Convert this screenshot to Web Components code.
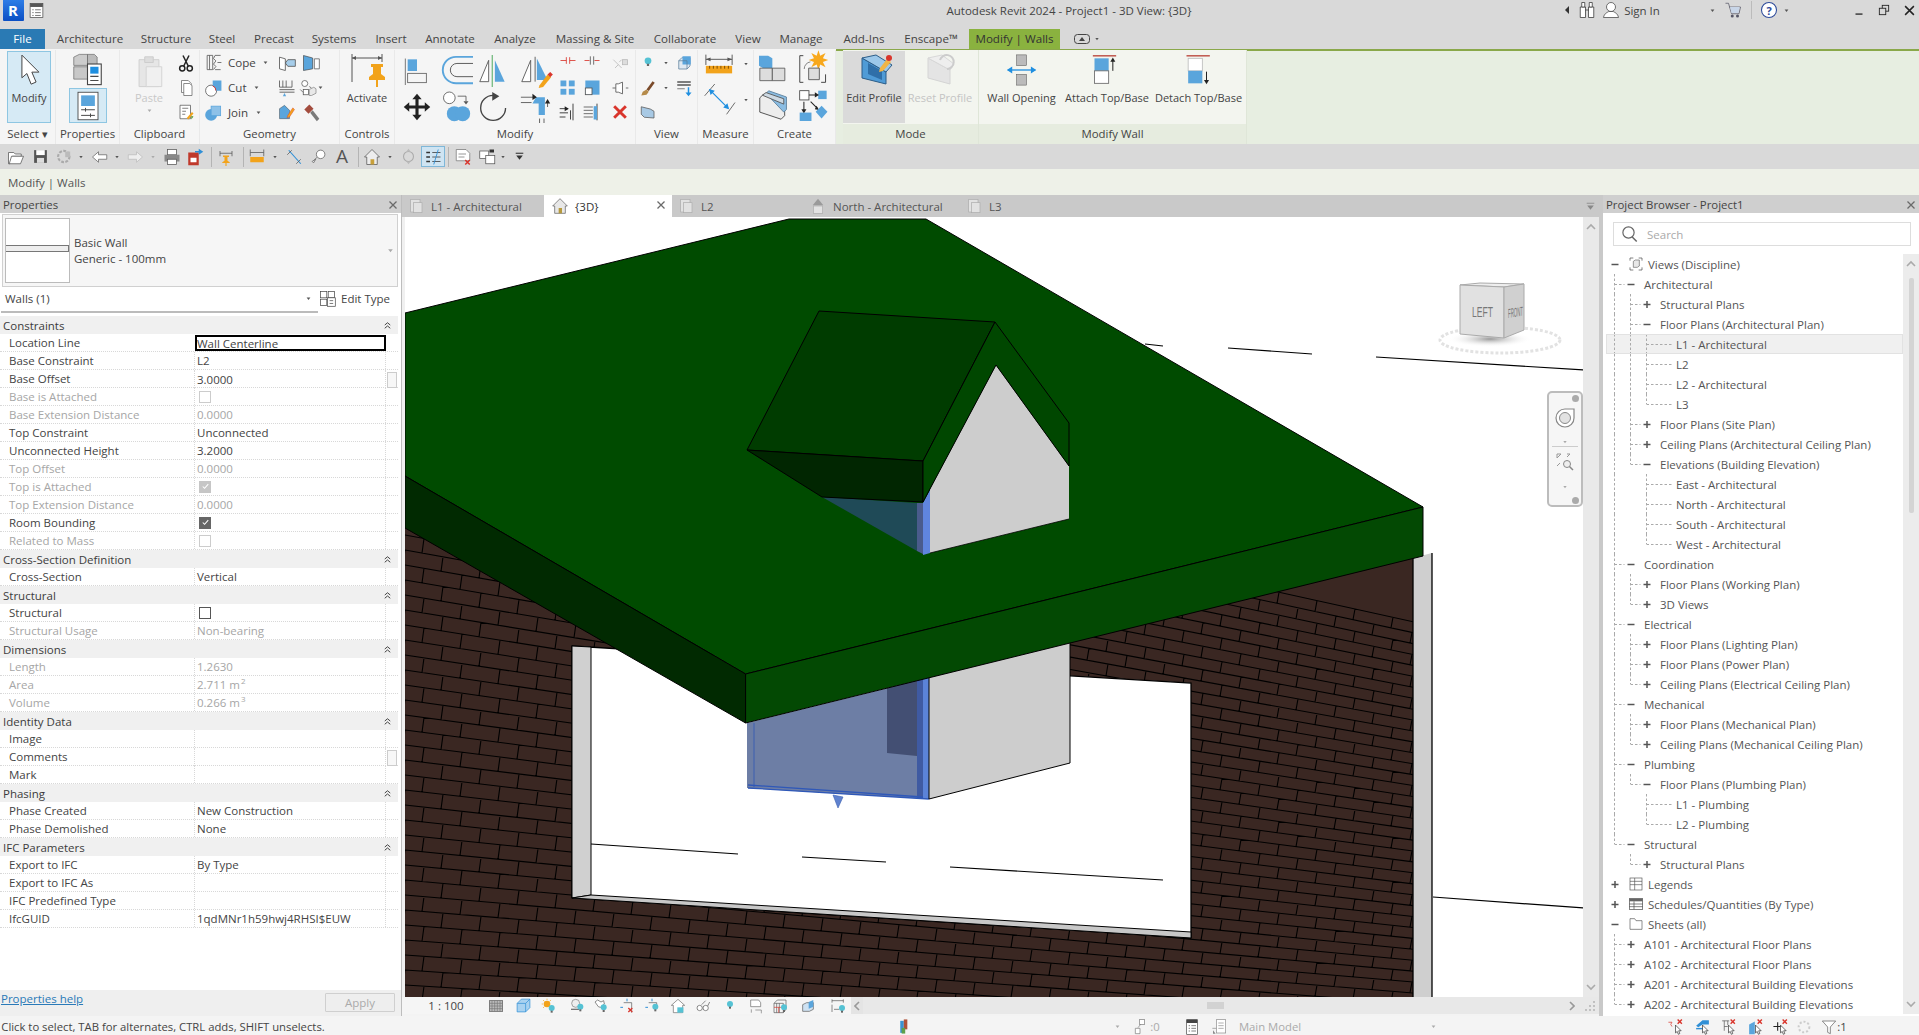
<!DOCTYPE html>
<html>
<head>
<meta charset="utf-8">
<title>Revit</title>
<style>
  html, body { margin: 0; padding: 0; width: 1919px; height: 1035px; overflow: hidden; background: #d9d9d9; }
  body { font: 11.5px "Open Sans", "Liberation Sans", sans-serif; color: #444; }
</style>
</head>
<body>
<rvt-app></rvt-app>
<script>
const BL = '#5aa5dc', DK = '#4a4a4a', CY = '#55c2d4', RD = '#d9352c', OR = '#f2a31b';
const line = (d, c = DK, w = 1) => `<path d="${d}" fill="none" stroke="${c}" stroke-width="${w}"/>`;
const fill = (d, c, s = 'none', w = 1) => `<path d="${d}" fill="${c}" stroke="${s}" stroke-width="${w}"/>`;
const bulb = (x = 17, y = 16) => `<circle cx="${x}" cy="${y}" r="4.5" fill="${CY}"/><rect x="${x - 1.5}" y="${y + 4}" width="3" height="3" fill="#666"/>`;
const redx = (x = 18, y = 18) => line(`M${x - 3} ${y - 3}l6 6m0-6l-6 6`, RD, 2);
const cur = fill('M12 10v11l2.500-2 1.500 4 2-1-1.500-4H20z', '#fff', '#222', .9);

// icons drawn on a 36 box, all others on a 24 box
const BIG = new Set(['activate', 'align', 'offset', 'mirrorpick', 'mirrordraw', 'move', 'copym', 'rotate', 'trim', 'blocks', 'group', 'wallgroup', 'editprofile', 'resetprofile', 'wallopen', 'attach', 'detach']);
const ICONS = {
  dd: fill('M7 9h10l-5 7z', '#555'),
  ddg: fill('M7 9h10l-5 7z', '#aaa'),
  cursor: fill('M7 1.500V17.500L10.500 14.500 13.500 22 17 20.500 14 13.500H19Z', '#fff', '#444', .7),
  types: fill('M2 3l4-2h6v8H2z', '#ccc', '#666', .5) + fill('M12 1h5l2 2v6h-7z', '#bbb', '#666', .5) + fill('M2 10h10v9H2z', '#c8c8c8', '#666', .5) + '<rect x="12" y="8" width="10" height="15" fill="#fff" stroke="#444" stroke-width=".8"/><rect x="14" y="10" width="6" height="5" fill="#1f8fe0"/>' + line('M14 17h6M14 20h6', DK, .8),
  props: '<rect x="4" y="1" width="16" height="22" fill="#fff" stroke="#444" stroke-width=".7"/><rect x="6.500" y="3.500" width="11" height="8.500" fill="' + BL + '"/>' + line('M6.500 15h11M6.500 19.500h11M10 13.500v3M14 18v3', DK, .8),
  paste: fill('M5 4h14v19H5z', '#e6e6e6', '#d0d0d0', .7) + fill('M9 2h6v4H9z', '#ddd', '#ccc', .7) + fill('M10 9h11v14H10z', '#f0f0f0', '#d4d4d4', .7),
  scissors: line('M8 2l7 14M16 2L9 16', '#222', 2) + '<circle cx="7" cy="19" r="3.500" fill="none" stroke="#222" stroke-width="2"/><circle cx="17" cy="19" r="3.500" fill="none" stroke="#222" stroke-width="2"/>',
  copy: fill('M6 2h9l4 4v12H6z', '#fff', '#666') + fill('M9 6h8l3 3v13H9z', '#fff', '#666'),
  match: fill('M4 3h14v18H4z', '#fff', '#555') + line('M7 7h8M7 11h5M7 15h4', '#555') + fill('M13 20l7-8 2 2-7 8z', OR) + fill('M19 17l3 1-3 4z', '#5b9a3a'),
  cope: line('M4 3h7v18H4M7 3v18M4 3v18', '#555') + line('M14 3h7M14 21h7M14 3l-2 4 3 3-3 4 3 3-3 4M17 12h5', '#555'),
  geocut: '<circle cx="9" cy="16" r="7" fill="#fff" stroke="#555"/>' + fill('M11 3h11v13H15a8 8 0 0 0-4-6z', BL) + line('M15 16a6 6 0 0 0-4-6', RD, 1.200),
  join: '<circle cx="9" cy="15" r="7.500" fill="' + BL + '"/><rect x="9" y="4" width="12" height="12" fill="#8dc1e8" stroke="' + BL + '"/>',
  wallface: fill('M3 5l7 2v14l-7-2z', '#fff', '#555') + fill('M13 8h9v8h-9l-3-4z', '#a6cdea', '#555'),
  paintf: fill('M3 3l11 3v13L3 21z', BL, '#444', .8) + fill('M16 7h6v12h-6z', '#fff', '#666'),
  solid: line('M3 3v8h15V3M7 3v8M11 3v8', '#555') + line('M3 14h18M3 17h18', DK, 1) + fill('M9 18l-2 4h4z', BL),
  tofrom: '<circle cx="9" cy="6" r="4" fill="#fff" stroke="#555"/><rect x="7" y="14" width="7" height="7" fill="#fff" stroke="#555"/>' + line('M3 14l4 4M15 10l3 2', '#555') + fill('M15 14l6-3 3 2v6l-6 3h-3z', '#e8e8e8', '#888'),
  splitb: fill('M3 20V8l6-4 6 6v10z', BL, '#333', .5) + fill('M13 16l6-9 2 2-6 9-3 1z', OR, RD, .5),
  hammer: fill('M4 9l6-6 5 5-6 6z', '#a34c3e') + fill('M11 13l3-3 8 10-3 3z', '#7a7a7a'),
  activate: line('M3 2v28M33 2v8M3 6h30', '#555') + fill('M3 6l4-2v4zM33 6l-4-2v4z', '#555') + fill('M22 12h12v3h-2v7l4 3v3H20v-3l4-3v-7h-2z', OR) + line('M28 28v7', OR, 2),
  align: line('M3 2v34', '#555') + fill('M6 3h12v15H6z', BL) + '<rect x="6" y="21" width="24" height="12" fill="none" stroke="#555"/>',
  offset: line('M36 3H18a14 14 0 0 0 0 28h18', BL, 2) + line('M36 10H19a7 7 0 0 0 0 14h17', '#555'),
  mirrorpick: fill('M2 30L12 6v24z', '#fff', '#555') + line('M16 0v36', '#3aa04a') + fill('M19 6l11 24H19z', BL),
  mirrordraw: fill('M2 30L12 6v24z', '#fff', '#555') + line('M17 2v28', '#555') + fill('M19 4l12 24H19z', BL) + fill('M22 34l9-12 4 3-9 11-5 1z', OR) + fill('M31 22l3-3 3 3-3 3z', RD),
  move: fill('M18 1l6 7h-4v8h8v-4l7 6-7 6v-4h-8v8h4l-6 7-6-7h4v-8H8v4l-7-6 7-6v4h8V8h-4z', '#222'),
  copym: '<circle cx="10" cy="7" r="7" fill="#fff" stroke="#555"/><circle cx="16" cy="26" r="9" fill="' + BL + '"/><circle cx="26" cy="26" r="9" fill="' + BL + '"/>' + line('M20 5h10v6', '#555') + fill('M27 11h6l-3 4z', '#555'),
  rotate: line('M17 5a14 14 0 1 0 14 14', '#444', 1.500) + fill('M16 1l8 5-8 5z', '#444'),
  trim: line('M1 7h16M1 13h12', '#555') + fill('M18 7h10v20h-7V14h-7z', BL) + line('M22 31v5M27 31v5M31 18v-8', '#555') + fill('M14 3l5 4-5 3zM28 14l3-5 3 5z', '#222'),
  splitel: line('M3 9h7M14 9h7M10 5v8M14 5v8', RD),
  splitgap: line('M3 9h6M15 9h6', RD) + line('M10 4v10M14 4v10', '#555'),
  pin: line('M4 8l10 10M14 8l-3 3M6 18l4-4', '#bbb') + '<rect x="15" y="8" width="6" height="6" fill="#ddd" stroke="#bbb"/>',
  array4: '<rect x="3" y="3" width="7" height="7" fill="' + BL + '"/><rect x="13" y="3" width="7" height="7" fill="' + BL + '"/><rect x="3" y="13" width="7" height="7" fill="' + BL + '"/><rect x="13" y="13" width="7" height="7" fill="' + BL + '"/>',
  scale: '<rect x="4" y="3" width="17" height="17" fill="' + BL + '"/><rect x="4" y="12" width="8" height="8" fill="#fff" stroke="#555"/>',
  unpin: line('M3 12h4M19 12h3', '#555') + fill('M7 7h3l5-2v14l-5-2H7z', '#fff', '#555'),
  trimone: line('M2 8h10M2 13h10M2 18h7', '#222') + line('M18 2v20M15 10v11', '#222') + fill('M8 5l5 3-5 3z', '#222'),
  trimm: line('M2 6h11M2 10h11M2 14h11M2 18h11', '#555') + line('M18 2v20', '#222') + fill('M14 5h4v16h-4z', BL),
  del: line('M5 5l14 14M19 5L5 19', RD, 3.500),
  bulb: bulb(12, 9),
  box: fill('M5 9l4-4h11v11l-4 4H5z', '#dfe9f2', '#5b7f9c') + fill('M10 3h11v11H10z', BL) + line('M5 9h11v11', '#5b7f9c'),
  brush: fill('M18 3l3 2-8 11-3-2z', '#7a4a2a') + fill('M5 17l5-3 3 3-3 4-7 1z', '#b58b4a'),
  lines: line('M3 4h18M3 8h18', '#555', 2) + line('M3 13h10', '#555', 1) + line('M18 11v10', '#1f8fe0', 2) + fill('M14 18h8l-4 5z', '#1f8fe0'),
  glassb: fill('M3 5l12 3 5 3v9L7 19l-4-4z', '#a8c9e4', '#555'),
  measure: line('M2 3v11M30 3v11M2 8h28', '#555') + fill('M2 8l5-2v4zM30 8l-5-2v4z', '#555') + `<rect x="2" y="15" width="28" height="8" fill="${OR}"/>` + line('M6 15v3M10 15v3M14 15v3M18 15v3M22 15v3M26 15v3', '#7a4a00'),
  measured: line('M2 14L14 0M28 36l10-14', '#555') + line('M8 7l22 22', '#1f8fe0', 1.500) + fill('M7 6l7 2-5 5zM31 30l-7-2 5-5z', '#1f8fe0'),
  blocks: fill('M0 2h11l5 3v12H5L0 14z', BL) + fill('M1 17h15v15H1z', '#ddd', '#555') + fill('M16 17h15v15H16z', '#ddd', '#555'),
  group: line('M6 3H2v30h4M26 33h5V24', '#333') + fill('M23 -3l2 6 6-3-3 6 6 2-6 2 3 6-6-3-2 6-2-6-6 3 3-6-6-2 6-2-3-6 6 3z', '#f8a81c') + line('M7 18a8 8 0 0 1 7-8', '#777') + fill('M12 17h12v13H12z', '#ddd', '#555'),
  wallgroup: fill('M2 10l4-4 24 8v16l-4 4L2 26z', '#ededed', '#444') + fill('M9 5l3-3 20 7v14l-3 3z', '#8bbde3', '#5b7f9c') + fill('M5 7l4-3 20 7v6z', '#cdd9e3', '#555'),
  rules: '<rect x="2" y="2" width="11" height="11" fill="#fff" stroke="#444"/><rect x="24" y="2" width="10" height="10" fill="' + BL + '"/>' + line('M13 7h9M7 15v10M15 15l8 8', '#222', 1.200) + fill('M20 4l5 3-5 3zM4 24h6l-3 5zM22 20l3 5-5-1z', '#222') + `<rect x="2" y="28" width="14" height="10" fill="${BL}"/>` + fill('M28 20l7 7-7 8-7-8z', BL),
  editprofile: fill('M6 6l24 14v12L6 26z', '#4f9bd6', '#2c5d88') + fill('M6 6l14-3 16 10-6 7z', '#9cc8ea', '#2c5d88') + fill('M12 11l14 8v9l-14-6z', '#2f6fa8') + fill('M24 16l7-9 4 3-8 9-4 1z', '#f0b545') + `<circle cx="33" cy="6" r="3" fill="${RD}"/>`,
  resetprofile: fill('M6 6l22 12v14L6 26z', '#e4e4e4', '#d4d4d4') + fill('M6 6l14-3 12 9-4 6z', '#eee', '#d8d8d8') + line('M18 8a7 7 0 1 1 7 9', '#ccc', 2),
  wallopen: '<rect x="12" y="1" width="11" height="12" fill="#bbb" stroke="#555" stroke-width=".6"/><rect x="12" y="23" width="11" height="12" fill="#bbb" stroke="#555" stroke-width=".6"/>' + line('M2 18h31', '#1f8fe0', 1.500) + fill('M1 18l6-4v8zM34 18l-6-4v8z', '#1f8fe0'),
  attach: line('M1 1h28', '#b5362a', 1.500) + `<rect x="3" y="4" width="17" height="15" fill="${BL}"/>` + '<rect x="3" y="19" width="17" height="15" fill="#fff" stroke="#666"/>' + line('M25 19V6', '#222', 1.200) + fill('M22 8l3-5 3 5z', '#222'),
  detach: line('M3 1h28', '#b5362a', 1.500) + '<rect x="5" y="4" width="17" height="15" fill="#fff" stroke="#bbb"/>' + `<rect x="5" y="19" width="17" height="15" fill="${BL}"/>` + line('M27 20v12', '#222', 1.200) + fill('M24 30h6l-3 5z', '#222'),
  open: fill('M2 6h7l2 2h8v3H7l-3 10H2z', '#fff', '#555') + fill('M6 11h16l-4 10H3z', '#fff', '#555'),
  save: fill('M3 3h18v18H3z', '#555') + '<rect x="6" y="3" width="12" height="7" fill="#fff"/><rect x="7" y="14" width="10" height="7" fill="#ddd"/>',
  sync: '<circle cx="11" cy="12" r="8" fill="none" stroke="#aaa" stroke-width="3" stroke-dasharray="4 2"/><rect x="13" y="5" width="7" height="8" fill="#bbb"/>',
  undo: fill('M10 5L2 12l8 7v-4h11v-6H10z', '#fff', '#666'),
  redo: fill('M14 5l8 7-8 7v-4H3v-6h11z', '#eee', '#bbb'),
  print: '<rect x="6" y="2" width="12" height="7" fill="#fff" stroke="#555"/><rect x="2" y="9" width="20" height="9" fill="#888"/><rect x="6" y="15" width="12" height="7" fill="#fff" stroke="#555"/>',
  sheetx: `<rect x="3" y="6" width="14" height="17" fill="#c0392b"/><rect x="6" y="13" width="8" height="6" fill="#fff"/>` + fill('M12 4h5V1l6 4-6 4V6h-5z', '#2f8fd6'),
  pinq: line('M4 4v7M20 4v7M4 7h16', '#555') + fill('M8 10h8v2h-2v5l3 2v1H7v-1l3-2v-5H8z', OR) + line('M12 20v4', OR, 1.500),
  ruler: line('M3 2v9M21 2v9M3 6h18', '#555') + `<rect x="3" y="12" width="18" height="7" fill="${OR}"/>`,
  align2: line('M5 3l16 18', '#2f8fd6', 1.500) + line('M3 9l6-6M15 21l6-6', '#555'),
  tagq: '<circle cx="15" cy="9" r="6" fill="#fff" stroke="#555"/>' + line('M10 13l-5 5', '#555') + fill('M3 19l5-3-3 5z', '#fff', '#555'),
  home: fill('M12 2L2 12h3v10h14V12h3z', '#ededed', '#555') + '<rect x="10" y="15" width="5" height="7" fill="#c8a03a"/>',
  orbit: '<circle cx="12" cy="12" r="7" fill="none" stroke="#aaa" stroke-width="1.500"/>' + fill('M12 1l3 4H9zM12 23l-3-4h6z', '#bbb'),
  thin: line('M3 6h5M3 12h5M3 18h5', '#333', 2) + line('M11 6h11M11 12h11M11 18h11', '#333') + line('M13 22L19 2', '#2f8fd6', 1.200),
  closehid: fill('M3 2h13l5 5v10H3z', '#fff', '#777') + line('M6 8h10M6 12h8', '#777') + redx(18, 19),
  switchw: '<rect x="1" y="4" width="12" height="10" fill="#fff" stroke="#555"/><rect x="9" y="10" width="12" height="11" fill="#fff" stroke="#555"/>' + fill('M14 2h6v4h-6z', '#333'),
  over: line('M5 6h14', '#333', 2) + fill('M6 10h12l-6 8z', '#333'),
  over2: line('M5 6h14', '#888', 1.500) + fill('M6 10h12l-6 8z', '#888'),
  r_tab: '<rect x="4" y="2" width="14" height="19" fill="#e2e2e2" stroke="#aaa"/><rect x="8" y="7" width="13" height="15" fill="#e2e2e2" stroke="#aaa"/>',
  tabhouse: fill('M12 1L1 12h3v11h16V12h3z', '#e8e8e8', '#555') + '<rect x="10" y="15" width="5" height="8" fill="#b69a3e"/>',
  tabelev: fill('M12 1L4 11h16z', '#9a9a9a') + '<rect x="5" y="12" width="14" height="11" fill="#e2e2e2" stroke="#aaa"/>',
  binoc: fill('M3 8h7v14H3zM14 8h7v14h-7z', '#fff', '#333') + fill('M5 2h4v6H5zM15 2h4v6h-4z', '#fff', '#333') + line('M10 12h4', '#333'),
  user: '<circle cx="12" cy="8" r="6" fill="#fff" stroke="#444"/>' + fill('M2 22c1-6 6-7 7-8h6c1 1 6 2 7 8z', '#fff', '#444'),
  cart: line('M2 3h4l4 14h10l2-9H7', '#556') + fill('M8 8h13l-2 8H10z', '#c9d6e8') + '<circle cx="11" cy="20" r="2" fill="#556"/><circle cx="18" cy="20" r="2" fill="#556"/>',
  help: '<circle cx="12" cy="12" r="10" fill="#fff" stroke="#2c4a9a" stroke-width="1.400"/>',
  min: line('M6 19h12', '#222', 2.200),
  restore: '<rect x="9" y="4" width="11" height="10" fill="none" stroke="#222" stroke-width="1.500"/><rect x="4" y="9" width="11" height="11" fill="#d9d9d9" stroke="#222" stroke-width="1.500"/>',
  winx: line('M5 5l14 14M19 5L5 19', '#222', 2.400),
  qaticon: '<rect x="3" y="2" width="18" height="20" fill="#fff" stroke="#444"/><rect x="3" y="2" width="18" height="5" fill="#555"/>' + line('M6 11h2M10 11h8M6 15h2M10 15h8M6 19h2M10 19h8', '#444'),
  x: line('M5 5l14 14M19 5L5 19', '#6a6a6a', 2.600),
  chev: line('M6 11l6-5 6 5M6 18l6-5 6 5', '#333', 2),
  search: '<circle cx="10" cy="10" r="7.500" fill="none" stroke="#666" stroke-width="1.600"/>' + line('M15 16l6 6', '#666', 2),
  edittype: '<rect x="2" y="2" width="9" height="9" fill="#fff" stroke="#444"/><rect x="13" y="2" width="9" height="9" fill="#fff" stroke="#444"/><rect x="2" y="13" width="9" height="9" fill="#fff" stroke="#444"/><rect x="12" y="11" width="11" height="12" fill="#fff" stroke="#444"/>' + line('M15 15h5M15 19h5', '#444'),
  chk: fill('M6 12l4 4 8-9', 'none', '#fff', 2.200),
  views: line('M3 7V3h5M21 7V3h-5M3 17v4h5M21 17v4h-5', '#444') + fill('M8 8l3-2h6v9l-3 2H8z', '#e8e8e8', '#666'),
  legend: '<rect x="3" y="3" width="18" height="18" fill="#fff" stroke="#555"/>' + line('M3 8h18M3 13h18M10 3v18', '#555'),
  sched: '<rect x="2" y="4" width="20" height="16" fill="#fff" stroke="#444"/><rect x="2" y="4" width="20" height="4" fill="#666"/>' + line('M2 12h20M2 16h20M9 8v12', '#444'),
  sheets: fill('M3 4h7l2 3h9v13H3z', '#fff', '#555'),
  vc_detail: '<rect x="2" y="4" width="20" height="16" fill="#bbb" stroke="#555"/>' + line('M2 8h20M2 12h20M2 16h20M6 4v16M10 4v16M14 4v16M18 4v16', '#777', 1),
  vc_cube: fill('M3 9l6-6h12v12l-6 6H3z', '#a9d2f0', '#2f8fd6') + line('M3 9h12v12M15 9l6-6', '#2f8fd6'),
  vc_sun: `<circle cx="9" cy="9" r="5" fill="${OR}"/>` + line('M9 1v2M1 9h2M3 3l2 2M15 3l-2 2M3 15l2-2', OR) + bulb(16, 15),
  vc_shadow: '<circle cx="10" cy="8" r="6" fill="#eee" stroke="#777"/>' + line('M3 17h12', '#777', 2) + bulb(17, 13),
  vc_crop: fill('M3 6l4-3 5 3 4-2 1 5-6 5-3-1z', '#fff', '#555') + bulb(16, 14),
  vc_regx: line('M12 1v4M2 14h4', '#2f8fd6', 1.500) + line('M7 7h12v15', '#555') + redx(17, 18),
  vc_reg: line('M12 1v4M2 14h4', '#2f8fd6', 1.500) + line('M7 7h12v8', '#555') + bulb(17, 13),
  vc_lock: fill('M12 2L2 11h3v11h14V11h3z', '#fff', '#666') + `<rect x="11" y="14" width="9" height="8" fill="${CY}"/>`,
  vc_glasses: '<circle cx="7" cy="15" r="4" fill="#fff" stroke="#555"/><circle cx="16" cy="15" r="4" fill="#fff" stroke="#555"/>' + line('M10 10l6-6M19 12l3-6', '#555'),
  vc_reveal: fill('M4 3h12l3 4v6H4z', '#fff', '#666') + line('M11 18h9v5M5 17v5', '#777', 1),
  vc_3dwork: line('M3 8h14v14H3zM3 8l5-5h13v14l-4 5M7 8v14M11 8v14', '#555') + line('M3 14h14M10 14v8', RD) + bulb(18, 14),
  vc_hide: fill('M4 10l6-3h10v10l-6 3H4z', '#cfe2f2', '#555') + fill('M13 6l7-3v10l-7 3z', BL),
  vc_dim: line('M3 2v5M20 2v5M3 4h17M3 10v11M6 17h8', '#555') + bulb(18, 15),
  worksets: fill('M6 4h5v17H6z', '#3a92d0') + fill('M11 2h5v14h-5z', '#b05238') + fill('M8 14h5v8H8z', '#5ea04a'),
  st_wk: '<rect x="11" y="1" width="8" height="7" fill="#fff" stroke="#777"/>' + line('M13 8l-4 5', '#777') + fill('M5 14h7v8H5z', '#fff', '#777'),
  st_list: '<rect x="4" y="1" width="16" height="22" fill="#fff" stroke="#444"/><rect x="4" y="1" width="16" height="5" fill="#444"/>' + line('M7 10h2M11 10h7M7 14h2M11 14h7M7 18h2M11 18h7', '#444'),
  st_list2: '<rect x="8" y="1" width="14" height="20" fill="#fff" stroke="#888"/>' + line('M11 6h8M11 10h8M11 14h8M2 14h6', '#888') + fill('M3 17l4 5h-4z', '#888'),
  st1: line('M2 6h5a4 4 0 0 0 0 6', RD) + redx(18, 5) + cur,
  st2: fill('M3 11L12 3h9v6H12l-6 4z', '#2f8fd6') + line('M3 15h12', '#2f8fd6', 2) + cur,
  st3: line('M3 4h10M6 4v14M11 4v6M6 12h5', '#555') + redx(18, 5) + cur,
  st4: fill('M3 9l8-4v18H3z', '#5aa5dc') + redx(18, 5) + cur,
  st5: line('M2 12h12M8 6v12', '#222', 1.500) + redx(18, 5) + cur,
  st6: '<circle cx="12" cy="12" r="8" fill="none" stroke="#ccc" stroke-width="3" stroke-dasharray="3 3"/>',
  funnel: fill('M2 3h20l-8 9v10l-4-2v-8z', '#fff', '#555')
};

// flex strip: zero width slots, each one centred on the given x
function strip(items, x0 = 0) {
  let prev = x0;
  return items.map(it => {
    const h = `<span class="slot" style="margin-left:${it[0] - prev}px">${it[1]}</span>`;
    prev = it[0];
    return h;
  }).join('');
}
const ico = (n, s = 16, extra = '') => `<r-ico name="${n}" s="${s}" ${extra}></r-ico>`;
const SLOT = `.slot{display:flex;align-items:center;justify-content:center;flex:none;width:0;white-space:nowrap;height:100%}`;

class RIco extends HTMLElement {
  constructor() { super(); this.shadowDOM = this.attachShadow({mode: "open"}); }
  connectedCallback() {
    const s = this.getAttribute('s') || 16, n = this.getAttribute('name');
    const vb = this.getAttribute('vb') || (BIG.has(n) ? '0 0 36 36' : '0 0 24 24');
    this.shadowDOM.innerHTML = `<style>:host{display:inline-flex;flex:none;line-height:0}svg{overflow:visible}</style>
      <svg width="${s}" height="${s}" viewBox="${vb}">${ICONS[n] || ''}</svg>`;
  }
}
customElements.define('r-ico', RIco);

class RPanel extends HTMLElement {
  constructor() { super(); this.shadowDOM = this.attachShadow({mode: "open"}); }
  connectedCallback() {
    this.shadowDOM.innerHTML = `<style>
      :host{display:flex;flex-direction:column;flex:none;width:${this.getAttribute('w')}px;height:94px;border-right:1px solid #e9e9e9;box-sizing:border-box}
      :host([ctx]){border-right:1px solid #dfe6d8}
      .c{height:74px;box-sizing:border-box;position:relative}
      .l{height:20px;line-height:19px;text-align:center;font-size:11.4px;color:#444;white-space:nowrap}
      :host([ctx]) .c{background:#f3f5ef}
      :host([ctx]) .l{background:#e6ecdf}
    </style><div class="c"><slot></slot></div><div class="l">${this.getAttribute('label')}</div>`;
  }
}
customElements.define('r-panel', RPanel);

class RBig extends HTMLElement {
  constructor() { super(); this.shadowDOM = this.attachShadow({mode: "open"}); }
  connectedCallback() {
    const w = this.getAttribute('w'), ic = this.getAttribute('icon');
    this.shadowDOM.innerHTML = `<style>
      :host{display:inline-flex;flex-direction:column;align-items:center;box-sizing:border-box;width:${w}px;height:72px;margin-top:1px;flex:none;color:#444;white-space:nowrap}
      :host([active]){background:#d6eaf5;outline:1px solid #8ec6e2;outline-offset:-1px}
      :host([grey]){background:#dadada}
      :host([off]){color:#c4c4c4}
      .i{height:38px;display:flex;align-items:center;justify-content:center}
      .t{line-height:16px;margin-top:1px;font-size:11px}
    </style><div class="i">${ico(ic, this.getAttribute('s') || 34)}</div><div class="t">${this.getAttribute('label')}</div><slot></slot>`;
  }
}
customElements.define('r-big', RBig);

class TitleBar extends HTMLElement {
  constructor() { super(); this.shadowDOM = this.attachShadow({mode: "open"}); }
  connectedCallback() {
    const logo = `<span class="logo">R</span>`;
    this.shadowDOM.innerHTML = `<style>
      :host{display:flex;height:29px;background:#d9d9d9;color:#444;font-size:11.5px;align-items:center}
      ${SLOT}
      .logo{width:21px;height:22px;background:linear-gradient(#2f7fe8,#0b4fc4);color:#fff;font:700 15px "Open Sans",sans-serif;display:flex;align-items:center;justify-content:center;border-radius:1px;flex:none}
      .sep{width:1px;height:18px;background:#bbb;flex:none}
      .q{position:relative;display:inline-flex}
      .q b{position:absolute;inset:0;display:flex;align-items:center;justify-content:center;color:#2c4a9a;font:700 11px "Open Sans",sans-serif}
      .slot{height:auto;margin-top:-9px}
    </style>` + strip([
      [13, logo], [36, ico('qaticon', 17)],
      [1069, `<span>Autodesk Revit 2024 - Project1 - 3D View: {3D}</span>`],
      [1568, `<span style="width:0;height:0;border:4px solid transparent;border-right-color:#333;border-left:0;margin-left:-2px"></span>`],
      [1587, ico('binoc', 18)], [1611, ico('user', 18)], [1642, 'Sign In'], [1712, ico('dd', 9)],
      [1733, ico('cart', 18)], [1751, `<span class="sep"></span>`],
      [1769, `<span class="q">${ico('help', 18)}<b>?</b></span>`], [1786, ico('dd', 9)],
      [1859, ico('min', 14)], [1884, ico('restore', 14)], [1909, ico('winx', 15)]
    ]);
  }
}
customElements.define('title-bar', TitleBar);

class MenuTabs extends HTMLElement {
  constructor() { super(); this.shadowDOM = this.attachShadow({mode: "open"}); }
  connectedCallback() {
    const tabs = [[90, 'Architecture'], [166, 'Structure'], [222, 'Steel'], [274, 'Precast'], [334, 'Systems'], [391, 'Insert'], [450, 'Annotate'], [515, 'Analyze'], [595, 'Massing &amp; Site'], [685, 'Collaborate'], [748, 'View'], [801, 'Manage'], [864, 'Add-Ins'], [931, 'Enscape™']];
    this.shadowDOM.innerHTML = `<style>
      :host{display:flex;height:20px;background:#d9d9d9;color:#444;font-size:11.6px;align-items:stretch}
      ${SLOT}
      .file{background:#2a7ab4;color:#fff;width:45px;flex:none;display:flex;align-items:center;justify-content:center;padding-bottom:2px;box-sizing:border-box}
      .ctx{background:#8ab23f;color:#333;width:91px;flex:none;display:flex;align-items:center;justify-content:center;margin-left:38px;padding-bottom:2px;box-sizing:border-box}
      .last{flex:none;width:50px;display:flex;align-items:center;justify-content:center;gap:3px;margin-left:2px}
      .rest{display:flex;padding-bottom:2px;box-sizing:border-box}
    </style><div class="file">File</div><div class="rest">${strip(tabs, 45)}</div>
      <div class="ctx">Modify | Walls</div>
      <div class="last"><svg width="16" height="10" viewBox="0 0 16 10"><rect x=".5" y=".5" width="15" height="9" rx="3" fill="none" stroke="#444"/><path d="M5 7h6L8 3z" fill="#444"/></svg>${ico('dd', 8)}</div>`;
  }
}
customElements.define('menu-tabs', MenuTabs);

class RibbonBar extends HTMLElement {
  constructor() { super(); this.shadowDOM = this.attachShadow({mode: "open"}); }
  connectedCallback() {
    const small = (n, s = 20) => `<span class="cell">${ico(n, s)}</span>`;
    const txt = (n, t, w) => `<span class="geo">${ico(n, 19)}<span class="gt" style="width:${w}px">${t}</span>${ico('dd', 9)}</span>`;
    this.shadowDOM.innerHTML = `<style>
      :host{display:flex;height:95px;background:#f5f5f5;color:#444;font-size:11.6px}
      .bar{display:flex;width:836px;flex:none;padding-top:1px;box-sizing:border-box}
      .ctx{flex:1;background:#e7eee1;border-top:2px solid #8aa84a;display:flex;padding-left:7px;box-sizing:border-box}
      .ctx r-panel{margin-top:-1px}
      .g{display:grid;grid-template-rows:25px 25px 24px;align-items:center;justify-items:center}
      .cell{display:flex;align-items:center;justify-content:center}
      .geo{display:flex;align-items:center;justify-self:start;gap:0}
      .gt{margin-left:5px}
      .flex{display:flex}
      .col{display:flex;flex-direction:column;align-items:center}
      .box{box-sizing:border-box;width:38px;height:35px;background:#d6eaf5;outline:1px solid #8ec6e2;outline-offset:-1px;display:flex;align-items:center;justify-content:center;margin-top:2px}
      .dis{color:#c8c8c8;line-height:16px;font-size:11px}
      .m{display:grid;grid-template-columns:44px 34px 42px 41px;grid-template-rows:37px 35px;align-items:center;justify-items:center;margin-top:2px}
    </style>
    <div class="bar">
      <r-panel w="56" label="Select ${'\u25BE'}"><div style="padding-left:7px"><r-big w="44" s="34" icon="cursor" label="Modify" active></r-big></div></r-panel>
      <r-panel w="64" label="Properties"><div class="col" style="padding-top:3px">${ico('types', 33)}<div class="box">${ico('props', 30)}</div></div></r-panel>
      <r-panel w="80" label="Clipboard"><div class="flex"><div class="col" style="width:54px;padding-left:4px;box-sizing:border-box"><div style="height:38px;display:flex;align-items:center;margin-top:2px">${ico('paste', 34)}</div><span class="dis">Paste</span>${ico('ddg', 9)}</div><div class="g" style="width:24px">${small('scissors', 18)}${small('copy', 18)}${small('match', 18)}</div></div></r-panel>
      <r-panel w="140" label="Geometry"><div class="g" style="grid-template-columns:71px 24px 24px;padding-left:4px">
        ${txt('cope', 'Cope', 33)}${small('wallface')}${small('paintf')}
        ${txt('geocut', 'Cut', 24)}${small('solid')}<span class="cell">${ico('tofrom', 18)}${ico('dd', 9)}</span>
        ${txt('join', 'Join', 26)}${small('splitb')}${small('hammer')}
      </div></r-panel>
      <r-panel w="55" label="Controls"><div style="padding-left:4px"><r-big w="46" s="36" icon="activate" label="Activate"></r-big></div></r-panel>
      <r-panel w="241" label="Modify"><div class="flex">
        <div class="m">
          <span class="cell">${ico('align', 28)}</span><span class="cell">${ico('offset', 34)}</span><span class="cell">${ico('mirrorpick', 32)}</span><span class="cell">${ico('mirrordraw', 32)}</span>
          <span class="cell">${ico('move', 28)}</span><span class="cell">${ico('copym', 30)}</span><span class="cell">${ico('rotate', 32)}</span><span class="cell">${ico('trim', 32)}</span>
        </div>
        <div class="g" style="grid-template-columns:24px 24px 32px">
          ${small('splitel')}${small('splitgap')}${small('pin')}
          ${small('array4')}${small('scale')}${small('unpin')}
          ${small('trimone')}${small('trimm')}${small('del')}
        </div>
      </div></r-panel>
      <r-panel w="62" label="View"><div class="g" style="grid-template-columns:24px 12px 24px">
        ${small('bulb', 18)}${ico('dd', 8)}${small('box', 18)}
        ${small('brush', 18)}${ico('dd', 8)}${small('lines', 18)}
        ${small('glassb', 18)}<span></span><span></span>
      </div></r-panel>
      <r-panel w="56" label="Measure"><div style="display:grid;grid-template-columns:42px 12px;grid-template-rows:28px 44px;align-items:center;justify-items:center">
        ${ico('measure', 30, 'vb="0 0 32 26"')}${ico('dd', 8)}${ico('measured', 32, 'vb="0 0 38 38"')}${ico('dd', 8)}
      </div></r-panel>
      <r-panel w="82" label="Create"><div style="display:grid;grid-template-columns:40px 40px;grid-template-rows:38px 34px;align-items:center;justify-items:center">
        ${ico('blocks', 30)}${ico('group', 32)}${ico('wallgroup', 32)}${ico('rules', 32, 'vb="0 0 38 38"')}
      </div></r-panel>
    </div>
    <div class="ctx">
      <r-panel ctx w="136" label="Mode"><div class="flex"><r-big grey w="62" s="36" icon="editprofile" label="Edit Profile"></r-big><r-big off w="70" s="36" icon="resetprofile" label="Reset Profile"></r-big></div></r-panel>
      <r-panel ctx w="268" label="Modify Wall"><div class="flex" style="padding-left:2px"><r-big w="81" s="32" icon="wallopen" label="Wall Opening"></r-big><r-big w="90" s="30" icon="attach" label="Attach Top/Base"></r-big><r-big w="93" s="30" icon="detach" label="Detach Top/Base"></r-big></div></r-panel>
    </div>`;
  }
}
customElements.define('ribbon-bar', RibbonBar);

class QuickBar extends HTMLElement {
  constructor() { super(); this.shadowDOM = this.attachShadow({mode: "open"}); }
  connectedCallback() {
    const sep = `<span class="sep"></span>`;
    const dd = ico('dd', 8);
    this.shadowDOM.innerHTML = `<style>
      :host{display:flex;height:25px;background:#d9d9d9;align-items:center;overflow:hidden}
      ${SLOT}
      .sep{width:1px;height:20px;background:#b4b4b4;flex:none}
      .act{width:24px;height:21px;background:#cfe4f2;outline:1px solid #7fb7d8;outline-offset:-1px;display:flex;align-items:center;justify-content:center;flex:none}
      .a{font:400 19px "Open Sans",sans-serif;color:#555;line-height:1}
    </style>` + strip([
      [16, ico('open', 18)], [40, ico('save', 17)], [64, ico('sync', 17)], [81, dd], [100, ico('undo', 18)], [117, dd],
      [135, ico('redo', 18)], [153, ico('ddg', 8)], [172, ico('print', 18)], [195, ico('sheetx', 18)], [211, sep], [226, ico('pinq', 18)], [243, sep],
      [257, ico('ruler', 18)], [275, dd], [294, ico('align2', 18)], [318, ico('tagq', 17)], [342, `<span class="a">A</span>`], [358, sep],
      [372, ico('home', 18)], [390, dd], [408, ico('orbit', 17)], [433, `<span class="act">${ico('thin', 18)}</span>`], [448, sep],
      [463, ico('closehid', 18)], [488, ico('switchw', 18)], [503, dd], [519, ico('over', 13)]
    ], 0);
  }
}
customElements.define('quick-bar', QuickBar);

class OptionsBar extends HTMLElement {
  constructor() { super(); this.shadowDOM = this.attachShadow({mode: "open"}); }
  connectedCallback() {
    this.shadowDOM.innerHTML = `<style>
      :host{display:flex;height:26px;background:#eef1e8;align-items:center;padding-left:8px;font-size:11.5px;color:#555;box-sizing:border-box}
    </style><span>Modify | Walls</span>`;
  }
}
customElements.define('options-bar', OptionsBar);

class PanelHead extends HTMLElement {
  constructor() { super(); this.shadowDOM = this.attachShadow({mode: "open"}); }
  connectedCallback() {
    this.shadowDOM.innerHTML = `<style>
      :host{display:flex;height:18px;background:#cfcfcf;align-items:center;justify-content:space-between;padding:1px 0 0 3px;box-sizing:border-box;font-size:11.4px;color:#444;flex:none}
    </style><span><slot></slot></span>${ico('x', 12, 'style="margin-right:2px"')}`;
  }
}
customElements.define('panel-head', PanelHead);

class PropPanel extends HTMLElement {
  constructor() { super(); this.shadowDOM = this.attachShadow({mode: "open"}); }
  connectedCallback() {
    const s = t => ['s', t], on = (a, b = '', x) => ['r', a, b, 0, x], off = (a, b = '') => ['r', a, b, 1];
    const rows = [
      s('Constraints'), on('Location Line', 'Wall Centerline', 'edit'), on('Base Constraint', 'L2'), on('Base Offset', '3.0000', 'grip'),
      off('Base is Attached', '[]'), off('Base Extension Distance', '0.0000'), on('Top Constraint', 'Unconnected'), on('Unconnected Height', '3.2000'),
      off('Top Offset', '0.0000'), off('Top is Attached', '[x]'), off('Top Extension Distance', '0.0000'), on('Room Bounding', '[x]'), off('Related to Mass', '[]'),
      s('Cross-Section Definition'), on('Cross-Section', 'Vertical'),
      s('Structural'), on('Structural', '[]'), off('Structural Usage', 'Non-bearing'),
      s('Dimensions'), off('Length', '1.2630'), off('Area', '2.711 m<sup>2</sup>'), off('Volume', '0.266 m<sup>3</sup>'),
      s('Identity Data'), on('Image'), on('Comments', '', 'grip'), on('Mark'),
      s('Phasing'), on('Phase Created', 'New Construction'), on('Phase Demolished', 'None'),
      s('IFC Parameters'), on('Export to IFC', 'By Type'), on('Export to IFC As'), on('IFC Predefined Type'), on('IfcGUID', '1qdMNr1h59hwj4RHSI$EUW')
    ];
    const val = (v, dis) => {
      if (v === '[]') return `<span class="ck ${dis ? 'dis' : ''}"></span>`;
      if (v === '[x]') return `<span class="ck full ${dis ? 'dis' : ''}">${ico('chk', 11)}</span>`;
      return `<span>${v}</span>`;
    };
    const html = rows.map(r => r[0] === 's'
      ? `<div class="sec"><span>${r[1]}</span>${ico('chev', 11)}</div>`
      : `<div class="row ${r[3] ? 'd' : ''}"><span class="k">${r[1]}</span><span class="v ${r[4] === 'edit' ? 'edit' : ''}">${val(r[2], r[3])}</span><span class="e">${r[4] === 'grip' ? '<i></i>' : ''}</span></div>`).join('');
    this.shadowDOM.innerHTML = `<style>
      :host{display:flex;flex-direction:column;width:402px;height:100%;background:#fff;flex:none;font-size:11.5px;color:#444;box-sizing:border-box;border-right:1px solid #bdbdbd}
      .type{height:73px;box-sizing:border-box;margin:1px 3px 0 2px;border:1px solid #d0d0d0;background:#f6f6f6;display:flex;align-items:center;padding-left:2px;flex:none}
      .th{width:65px;height:65px;background:#fff;border:1px solid #bbb;box-sizing:border-box;display:flex;align-items:center}
      .th i{display:block;width:100%;height:7px;border:1px solid #777;border-width:1px 1px 1px 0;box-sizing:border-box;background:#eee;margin-top:-5px}
      .tn{margin-left:4px;line-height:16px;flex:1}
      .walls{height:24px;display:flex;align-items:center;padding:0 0 2px 5px;box-sizing:border-box;flex:none}
      .walls .n{width:299px}
      .walls .b{margin-left:6px;display:flex;align-items:center;gap:5px}
      .rule{height:2px;width:317px;background:#bbb;margin:0 0 0 1px;flex:none}
      .sp{height:3px;flex:none}
      .body{padding-right:3px;flex:none}
      .sec{height:18px;background:#f0f0f0;display:flex;align-items:center;justify-content:space-between;padding:1px 5px 0 3px;line-height:20px;color:#3c3c3c;box-sizing:border-box}
      .row{height:18px;display:grid;grid-template-columns:194px 192px 12px;box-sizing:border-box;border-bottom:1px dotted #d8d8d8;align-items:stretch;line-height:17px}
      .k{padding-left:9px;white-space:nowrap}
      .v{padding-left:2px;border-left:1px dotted #d8d8d8;border-right:1px dotted #d8d8d8;white-space:nowrap;display:flex;align-items:center}
      .edit{outline:2px solid #000;outline-offset:-2px;margin:1px 0 0 1px;height:16px;padding-left:2px;border:0}
      .d .k,.d .v{color:#a6a6a6}
      sup{font-size:8px;line-height:0;margin-left:1px;vertical-align:5px}
      .ck{width:10px;height:10px;border:1px solid #555;margin-left:2px;display:flex;align-items:center;justify-content:center}
      .ck.dis{border-color:#ccc}
      .ck.full{background:#666;border-color:#666}
      .ck.full.dis{background:#c6c6c6;border-color:#c6c6c6}
      .e{display:flex;align-items:center;justify-content:center}
      .e i{display:block;width:8px;height:14px;border:1px solid #ccc;background:#f7f7f7;margin-top:2px}
      .fill{flex:1}
      .foot{height:26px;background:#efefef;display:flex;justify-content:space-between;align-items:center;flex:none;padding:0 6px 0 1px}
      .foot a{color:#2a7ab8;text-decoration:underline;margin-top:-9px}
      .ap{width:68px;height:17px;border:1px solid #cfcfcf;background:#eee;color:#aaa;display:flex;align-items:center;justify-content:center;margin-top:-1px;border-radius:1px}
    </style>
    <panel-head>Properties</panel-head>
    <div class="type"><div class="th"><i></i></div><div class="tn">Basic Wall<br>Generic - 100mm</div>${ico('ddg', 11, 'style="margin-right:1px"')}</div>
    <div class="walls"><span class="n">Walls (1)</span>${ico('dd', 9)}<span class="b">${ico('edittype', 17)}Edit Type</span></div>
    <div class="rule"></div><div class="sp"></div>
    <div class="body">${html}</div><div class="fill"></div>
    <div class="foot"><a>Properties help</a><span class="ap">Apply</span></div>`;
  }
}
customElements.define('prop-panel', PropPanel);

class ViewTabs extends HTMLElement {
  constructor() { super(); this.shadowDOM = this.attachShadow({mode: "open"}); }
  connectedCallback() {
    const tab = (w, ic, t) => `<div class="t" style="width:${w}px">${ico(ic, 16)}<span>${t}</span></div>`;
    this.shadowDOM.innerHTML = `<style>
      :host{display:flex;height:22px;background:#c9c9c9;font-size:11.5px;color:#555;flex:none;align-items:stretch}
      .t{display:flex;align-items:center;gap:7px;padding-left:6px;box-sizing:border-box;flex:none;white-space:nowrap}
      .on{background:#fff;color:#333;padding-left:4px}
      .x{margin-left:auto;margin-right:5px}
      .end{margin-left:auto;display:flex;align-items:center;padding-right:2px}
    </style>
    ${tab(142, 'r_tab', 'L1 - Architectural')}
    <div class="t on" style="width:128px">${ico('tabhouse', 16, 'style="margin-left:4px"')}<span>{3D}</span><span class="x">${ico('x', 12)}</span></div>
    ${tab(132, 'r_tab', 'L2')}
    ${tab(156, 'tabelev', 'North - Architectural')}
    ${tab(90, 'r_tab', 'L3')}
    <div class="end">${ico('over2', 13)}</div>`;
  }
}
customElements.define('view-tabs', ViewTabs);

class NavBar extends HTMLElement {
  constructor() { super(); this.shadowDOM = this.attachShadow({mode: "open"}); }
  connectedCallback() {
    this.shadowDOM.innerHTML = `<style>
      :host{position:absolute;left:1142px;top:174px;width:36px;height:116px;box-sizing:border-box;border:2px solid #bcbcbc;border-radius:5px;background:#f6f6f6;display:flex;flex-direction:column;align-items:center}
      .c{align-self:flex-end;width:7px;height:7px;border-radius:50%;background:#aaa;margin:2px 2px 0 0}
      .sep{width:26px;height:1px;background:#ccc;margin:3px 0 6px}
      svg,span{flex:none;display:block}
    </style><span class="c"></span>
    <svg width="24" height="24" viewBox="0 0 24 24" style="margin-top:4px"><path d="M3 12a9 9 0 0 1 9-9h9v9a9 9 0 0 1-9 9 9 9 0 0 1-9-9z" fill="#fff" stroke="#888" stroke-width="1.200"/><circle cx="12" cy="12" r="5.500" fill="#e2e2e2" stroke="#888"/></svg>
    <span style="margin-top:4px;height:9px">${ico('ddg', 8)}</span><span class="sep"></span>
    <svg width="18" height="18" viewBox="0 0 18 18"><path d="M1 5l4-4M1 1v4M1 1h4M14 1l-3 3M14 1h-3M1 13l3-3" fill="none" stroke="#999"/><circle cx="11" cy="11" r="3.500" fill="#eee" stroke="#888"/><path d="M13.500 13.500L17 17" stroke="#888" stroke-width="1.500"/></svg>
    <span style="margin-top:8px;height:9px">${ico('ddg', 8)}</span><span class="c" style="margin-top:9px"></span>`;
  }
}
customElements.define('nav-bar', NavBar);

class ViewCanvas extends HTMLElement {
  constructor() { super(); this.shadowDOM = this.attachShadow({mode: "open"}); }
  bricks() {
    // perspective courses: shallower toward the bottom of the wall
    let d = '';
    let i = 0;
    for (let y0 = 400; y0 < 1000; y0 += 15, i++) {
      const s = .22 - (y0 - 400) * .00027;
      const s2 = .22 - (y0 + 15 - 400) * .00027;
      d += `M405 ${y0}L1416 ${(y0 + s * 1011).toFixed(1)}`;
      for (let x = 405 + (i % 2 ? 19 : 0); x < 1416; x += 38) {
        const a = y0 + s * (x - 405), b = y0 + 15 + s2 * (x - 2 - 405);
        d += `M${x} ${a.toFixed(1)}L${x - 2} ${b.toFixed(1)}`;
      }
    }
    return d;
  }
  connectedCallback() {
    this.shadowDOM.innerHTML = `<style>
      :host{display:block;position:relative;flex:1;background:#fff;overflow:hidden;min-height:0}
      svg.m{display:block;width:1179px;height:780px}
      text{font-family:"Liberation Sans",sans-serif;fill:#777}
    </style>
    <svg class="m" viewBox="405 217 1179 780">
      <defs>
        <clipPath id="wall"><path d="M405 470L745 600 1413 540V997H405Z"/></clipPath>
        <radialGradient id="shd"><stop offset="0" stop-color="#999"/><stop offset="1" stop-color="#fff" stop-opacity="0"/></radialGradient>
      </defs>
      <rect x="405" y="217" width="1179" height="780" fill="#fff"/>
      <g stroke="#000" stroke-width="1.200">
        <path d="M1145 344L1163 346M1228 348L1312 354M1376 357L1584 370M1433 897L1584 908"/>
      </g>
      <g clip-path="url(#wall)"><rect x="405" y="470" width="1011" height="530" fill="#3a2722"/><path d="${this.bricks()}" stroke="#000" stroke-width="1.100" fill="none"/></g>
      <path d="M1413 558L1432 553V997H1413Z" fill="#cfcfcf"/>
      <path d="M1413 558V997M1432 553V997" stroke="#000" stroke-width="1.300"/>
      <path d="M572 646L1191 683V938L572 898Z" fill="#fff" stroke="#000" stroke-width="1.300"/>
      <path d="M572 646L591 647V895L572 898Z" fill="#d0d0d0" stroke="#000"/>
      <path d="M572 898L591 895 1191 932V938Z" fill="#c8c8c8" stroke="#000"/>
      <path d="M591 844L738 854M802 857L886 862M950 867L1163 880" stroke="#000" stroke-width="1.100"/>
      <path d="M747 723L929 678V799L747 788Z" fill="#6d7ea5"/>
      <path d="M887 688L917 680V756L887 753Z" fill="#434f73"/>
      <path d="M917 680L923 678V799H917Z" fill="#3f5aa2"/><path d="M923 678L929 677V799H923Z" fill="#5b83d8"/>
      <path d="M754 723V787" stroke="#3c5fb0"/>
      <path d="M748 785L923 797M748 788L929 799" stroke="#2f58b8" stroke-width="1.300" fill="none"/>
      <path d="M833 795L843 797 838 808Z" fill="#5f82cf" stroke="#3c5fb0" stroke-width=".6"/>
      <path d="M929 677L1070 642V763L929 799Z" fill="#cdcdcd" stroke="#000" stroke-width="1"/>
      <path d="M405 313L789 219H926L1423 507 745.600 674 405 476Z" fill="#004b00" stroke="#000"/>
      <path d="M405 476L745.600 674V723L405 528Z" fill="#012a01" stroke="#000"/>
      <path d="M745.600 674L1423 507V556L745.600 723Z" fill="#034903" stroke="#000"/>
      <path d="M822 497L917 503V551Z" fill="#1f4a57"/>
      <path d="M917 503L923 503V554L917 551Z" fill="#4a5b8c"/>
      <path d="M923 503L930 490V553L923 555Z" fill="#6085de"/>
      <path d="M996 365L1069 466V519L930 553V489Z" fill="#cdcdcd"/>
      <path d="M1069 519L930 553" stroke="#000" stroke-width=".8"/>
      <path d="M819 311L995 322 923 461 747 450Z" fill="#003c00" stroke="#000"/>
      <path d="M747 450L923 461V502L822 497Z" fill="#012601" stroke="#000"/>
      <path d="M995 322L1069 423V466L996 365 923 502V461Z" fill="#004700" stroke="#000"/>
      <ellipse cx="1500" cy="340" rx="60" ry="13" fill="none" stroke="#e2e2e2" stroke-width="3" stroke-dasharray="3 2"/>
      <ellipse cx="1490" cy="339" rx="42" ry="8" fill="url(#shd)"/>
      <path d="M1460 285L1480 283 1524 284 1504 287Z" fill="#eee" stroke="#aaa"/>
      <path d="M1460 285L1504 287V338L1460 334Z" fill="#e1e1e1" stroke="#aaa"/>
      <path d="M1504 287L1524 284V330L1504 338Z" fill="#d0d0d0" stroke="#aaa"/>
      <text x="1472" y="317" font-size="14" textLength="21" lengthAdjust="spacingAndGlyphs">LEFT</text>
      <text transform="translate(1508,318) skewY(-9)" font-size="13" textLength="15" lengthAdjust="spacingAndGlyphs">FRONT</text>
    </svg>
    <nav-bar></nav-bar>`;
  }
}
customElements.define('view-canvas', ViewCanvas);

class ViewArea extends HTMLElement {
  constructor() { super(); this.shadowDOM = this.attachShadow({mode: "open"}); }
  connectedCallback() {
    const vc = [[496, 'vc_detail'], [523, 'vc_cube'], [549, 'vc_sun'], [577, 'vc_shadow'], [601, 'vc_crop'], [627, 'vc_regx'], [652, 'vc_reg'], [678, 'vc_lock'], [703, 'vc_glasses'], [730, 'bulb'], [756, 'vc_reveal'], [780, 'vc_3dwork'], [808, 'vc_hide'], [838, 'vc_dim']];
    const items = [[446, '<span class="sc">1 : 100</span>']].concat(vc.map(v => [v[0], ico(v[1], v[1] === 'vc_cube' ? 17 : 16)]));
    this.shadowDOM.innerHTML = `<style>
      :host{display:flex;flex-direction:column;flex:none;width:1197px;height:100%;background:#f3f3f3;box-sizing:border-box}
      ${SLOT}
      .mid{display:flex;height:780px;flex:none;padding-left:3px;background:#f0f0f0}
      .vs{width:16px;background:#e9e9e9;flex:none;display:flex;flex-direction:column;align-items:center;justify-content:space-between}
      .vs svg{margin:6px 0}
      .ctrl{display:flex;height:17px;align-items:center;background:#f5f5f5;font-size:11.5px;color:#444;flex:none}
      .sc{color:#444}
      .hs{flex:1;height:100%;background:#e8e8e8;display:flex;align-items:center}
      .hs i{display:block;width:17px;height:7px;background:#d2d2d2;margin-left:344px}
      .hs svg{margin-left:auto;margin-right:3px}
      .lb{width:12px;flex:none;background:#e4e4e4;height:100%;display:flex;align-items:center;justify-content:center;margin-left:13px}
      .stripw{display:flex;height:100%}
    </style>
    <view-tabs></view-tabs>
    <div class="mid"><view-canvas></view-canvas><div class="vs"><svg width="10" height="7" viewBox="0 0 10 7"><path d="M1 6l4-4 4 4" fill="none" stroke="#aaa" stroke-width="1.600"/></svg><svg width="10" height="7" viewBox="0 0 10 7"><path d="M1 1l4 4 4-4" fill="none" stroke="#aaa" stroke-width="1.600"/></svg></div></div>
    <div class="ctrl"><div class="stripw">${strip(items, 402)}</div>
      <div class="lb"><svg width="6" height="10" viewBox="0 0 6 10"><path d="M5 1L1 5l4 4" fill="none" stroke="#999" stroke-width="1.600"/></svg></div>
      <div class="hs"><i></i><svg width="6" height="10" viewBox="0 0 6 10"><path d="M1 1l4 4-4 4" fill="none" stroke="#999" stroke-width="1.600"/></svg><svg width="16" height="12" viewBox="0 0 16 12" style="margin-right:2px;margin-left:3px"><path d="M12 2h2M8 6h2M12 6h2M4 10h2M8 10h2M12 10h2" stroke="#999"/></svg></div></div>`;
  }
}
customElements.define('view-area', ViewArea);

class BrowserPanel extends HTMLElement {
  constructor() { super(); this.shadowDOM = this.attachShadow({mode: "open"}); }
  connectedCallback() {
    const T = [
      [0, '-', 'Views (Discipline)', 'views'], [1, '-', 'Architectural'], [2, '+', 'Structural Plans'], [2, '-', 'Floor Plans (Architectural Plan)'],
      [3, '', 'L1 - Architectural', '', 1], [3, '', 'L2'], [3, '', 'L2 - Architectural'], [3, '', 'L3'],
      [2, '+', 'Floor Plans (Site Plan)'], [2, '+', 'Ceiling Plans (Architectural Ceiling Plan)'], [2, '-', 'Elevations (Building Elevation)'],
      [3, '', 'East - Architectural'], [3, '', 'North - Architectural'], [3, '', 'South - Architectural'], [3, '', 'West - Architectural'],
      [1, '-', 'Coordination'], [2, '+', 'Floor Plans (Working Plan)'], [2, '+', '3D Views'],
      [1, '-', 'Electrical'], [2, '+', 'Floor Plans (Lighting Plan)'], [2, '+', 'Floor Plans (Power Plan)'], [2, '+', 'Ceiling Plans (Electrical Ceiling Plan)'],
      [1, '-', 'Mechanical'], [2, '+', 'Floor Plans (Mechanical Plan)'], [2, '+', 'Ceiling Plans (Mechanical Ceiling Plan)'],
      [1, '-', 'Plumbing'], [2, '-', 'Floor Plans (Plumbing Plan)'], [3, '', 'L1 - Plumbing'], [3, '', 'L2 - Plumbing'],
      [1, '-', 'Structural'], [2, '+', 'Structural Plans'],
      [0, '+', 'Legends', 'legend'], [0, '+', 'Schedules/Quantities (By Type)', 'sched'], [0, '-', 'Sheets (all)', 'sheets'],
      [1, '+', 'A101 - Architectural Floor Plans'], [1, '+', 'A102 - Architectural Floor Plans'], [1, '+', 'A201 - Architectural Building Elevations'], [1, '+', 'A202 - Architectural Building Elevations']
    ];
    const later = (i, l) => { for (let j = i + 1; j < T.length; j++) { if (T[j][0] < l) return false; if (T[j][0] === l) return true; } return false; };
    const owner = (i, l) => { for (let j = i; j >= 0; j--) if (T[j][0] === l) return j; return i; };
    const rows = T.map((r, i) => {
      const [l, ex, t, ic, hl] = r;
      const w = [22, 38, 54, 70][l];
      let g = '';
      for (let k = 1; k <= l; k++) {
        const x = 8.5 + 16 * (k - 1), more = later(owner(i, k), k);
        if (k === l) {
          g += `M${x} 0V${more ? 20 : 10}M${x} 10.500H${l === 3 ? x + 26 : x + 10}`;
        } else if (more) g += `M${x} 0V20`;
      }
      const cx = 9 + 16 * l;
      const mark = ex ? `<path d="M${cx - 3.500} 10.500H${cx + 3.500}${ex === '+' ? `M${cx} 7V14` : ''}" stroke="#555" stroke-width="1.500"/>` : '';
      return `<div class="row ${hl ? 'hl' : ''}"><svg width="${w}" height="20"><path d="${g}" fill="none" stroke="#aaa" stroke-dasharray="2.500 2"/>${mark}</svg>${ic ? ico(ic, 16, 'style="margin-right:4px"') : ''}<span>${t}</span></div>`;
    }).join('');
    this.shadowDOM.innerHTML = `<style>
      :host{display:flex;flex-direction:column;flex:1;height:100%;background:#fff;font-size:11.5px;color:#555;box-sizing:border-box;border-left:4px solid #c9c9c9;min-width:0}
      .sb{height:41px;box-sizing:border-box;padding:9px 8px 8px 10px;flex:none}
      .sb div{height:24px;box-sizing:border-box;border:1px solid #ddd;display:flex;align-items:center;padding-left:7px;gap:8px;color:#aaa}
      .tree{flex:1;display:flex;min-height:0}
      .list{flex:1;padding-left:3px;overflow:hidden;height:760px}
      .row{display:flex;align-items:center;height:20px;white-space:nowrap;box-sizing:border-box}
      .row svg{flex:none}
      .hl{background:#f0f0f0;outline:1px solid #e2e2e2;outline-offset:-1px}
      .vs{width:16px;background:#ececec;flex:none;position:relative;display:flex;flex-direction:column;align-items:center;justify-content:space-between;height:760px}
      .vs i{position:absolute;top:24px;width:5px;height:235px;background:#d4d4d4;border-radius:2px}
      .vs svg{margin:6px 0}
    </style>
    <panel-head>Project Browser - Project1</panel-head>
    <div class="sb"><div>${ico('search', 18)}<span>Search</span></div></div>
    <div class="tree"><div class="list">${rows}</div><div class="vs"><i></i><svg width="10" height="7" viewBox="0 0 10 7"><path d="M1 6l4-4 4 4" fill="none" stroke="#aaa" stroke-width="1.600"/></svg><svg width="10" height="7" viewBox="0 0 10 7"><path d="M1 1l4 4 4-4" fill="none" stroke="#aaa" stroke-width="1.600"/></svg></div></div>`;
  }
}
customElements.define('browser-panel', BrowserPanel);

class StatusBar extends HTMLElement {
  constructor() { super(); this.shadowDOM = this.attachShadow({mode: "open"}); }
  connectedCallback() {
    this.shadowDOM.innerHTML = `<style>
      :host{display:flex;height:19px;background:#f4f4f4;font-size:11.3px;color:#444;align-items:center;flex:none;padding-top:2px;box-sizing:border-box}
      ${SLOT}
      .g{color:#aaa}
    </style>` + strip([
      [163, 'Click to select, TAB for alternates, CTRL adds, SHIFT unselects.'],
      [904, ico('worksets', 17)], [1117, ico('ddg', 9)], [1140, ico('st_wk', 16)], [1155, '<span class="g">:0</span>'], [1192, ico('st_list', 16)], [1219, ico('st_list2', 16)],
      [1270, '<span class="g">Main Model</span>'], [1433, ico('ddg', 9)],
      [1675, ico('st1', 17)], [1702, ico('st2', 17)], [1728, ico('st3', 17)], [1755, ico('st4', 17)], [1780, ico('st5', 17)], [1804, ico('st6', 16)], [1829, ico('funnel', 16)], [1842, ':1']
    ], 0);
  }
}
customElements.define('status-bar', StatusBar);

class RvtApp extends HTMLElement {
  constructor() { super(); this.shadowDOM = this.attachShadow({mode: "open"}); }
  connectedCallback() {
    this.shadowDOM.innerHTML = `<style>
      :host{display:flex;flex-direction:column;width:1919px;height:1035px;font:11.5px "Open Sans","Liberation Sans",sans-serif;overflow:hidden}
      .main{display:flex;height:821px;flex:none;background:#c9c9c9}
    </style>
    <title-bar></title-bar><menu-tabs></menu-tabs><ribbon-bar></ribbon-bar><quick-bar></quick-bar><options-bar></options-bar>
    <div class="main"><prop-panel></prop-panel><view-area></view-area><browser-panel></browser-panel></div>
    <status-bar></status-bar>`;
  }
}
customElements.define('rvt-app', RvtApp);
</script>
</body>
</html>
